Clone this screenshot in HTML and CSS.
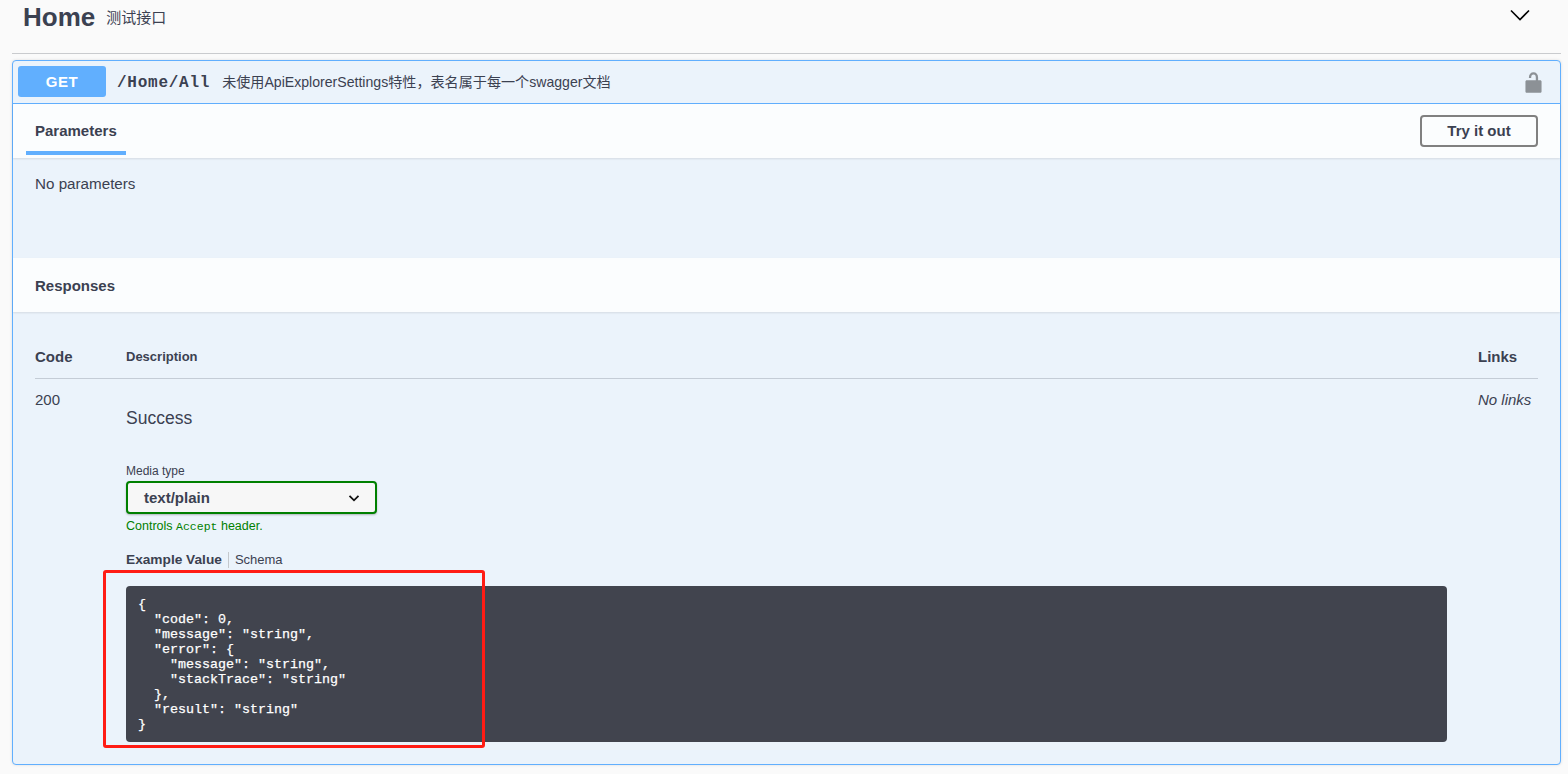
FILE: index.html
```html
<!DOCTYPE html>
<html lang="zh">
<head>
<meta charset="utf-8">
<title>Home</title>
<link rel="stylesheet" href="styles.css">
</head>
<body>
<div class="page">
  <header class="tag">
    <h3 class="tag-name">Home</h3>
    <span class="tag-desc">测试接口</span>
    <svg class="tag-arrow" width="20" height="20" viewBox="0 0 20 20"><path d="M1 5.5l9 9 9-9" fill="none" stroke="#000" stroke-width="1.6"/></svg>
  </header>
  <section class="op">
    <div class="op-head">
      <span class="method">GET</span>
      <span class="path">/Home/All</span>
      <span class="summary">未使用ApiExplorerSettings特性，表名属于每一个swagger文档</span>
      <svg class="lock" width="23" height="23" viewBox="0 0 20 20"><path d="M15.8 8H14V5.6C14 2.7 12.3 1 10 1S6 2.7 6 5.6V6h2v-.4C8 4 8.6 3 10 3s2 1 2 2.6V8H4.2C3.5 8 3 8.5 3 9.2v8.6c0 .7.5 1.2 1.2 1.2h11.6c.7 0 1.2-.5 1.2-1.2V9.2c0-.7-.5-1.2-1.2-1.2z" fill="#8c9196"/></svg>
    </div>
    <div class="bar bar-params">
      <div class="tab">Parameters</div>
      <button class="try">Try it out</button>
    </div>
    <div class="params-body">No parameters</div>
    <div class="bar bar-resp"><h4 class="resp-title">Responses</h4></div>
    <div class="resp-body">
      <div class="row row-head">
        <div class="col-code head-code">Code</div>
        <div class="col-desc head-desc">Description</div>
        <div class="col-links head-code">Links</div>
      </div>
      <div class="row row-main">
        <div class="col-code code-val">200</div>
        <div class="col-desc">
          <p class="success">Success</p>
          <div class="media-label">Media type</div>
          <div class="select"><span>text/plain</span>
            <svg width="20" height="20" viewBox="0 0 20 20"><path d="M5.5 7.8l4.5 4.5 4.5-4.5" fill="none" stroke="#111" stroke-width="1.8"/></svg>
          </div>
          <div class="controls">Controls <code class="accept">Accept</code> header.</div>
          <div class="tabs"><span class="tab-on">Example Value</span><span class="tab-off">Schema</span></div>
          <pre class="example">{
  "code": 0,
  "message": "string",
  "error": {
    "message": "string",
    "stackTrace": "string"
  },
  "result": "string"
}</pre>
        </div>
        <div class="col-links no-links">No links</div>
      </div>
    </div>
  </section>
  <div class="mark"></div>
</div>
</body>
</html>
```
FILE: styles.css
```css
html, body { margin: 0; padding: 0; height: 774px; overflow: hidden; background: #fafafa; }
body { font-family: "Liberation Sans", "Noto Sans CJK SC", sans-serif; color: #3b4151; }
.page { position: relative; padding: 0 7px 0 12px; }
.tag { display: flex; align-items: flex-start; height: 53px; border-bottom: 1px solid #c9cbce; }
.tag-name { margin: 0 0 0 11px; font-size: 26px; line-height: 34px; font-weight: 700; }
.tag-desc { margin: 7px 0 0 11px; font-size: 15px; line-height: 20px; color: #3b4151; font-family: "Noto Sans CJK SC", sans-serif; }
.tag-arrow { margin: 5px 31px 0 auto; }
.op { margin-top: 6px; border: 1px solid #61affe; border-radius: 4px; background: #ebf3fb; box-sizing: border-box; height: 705px; box-shadow: 0 0 3px rgba(0,0,0,.12); }
.op-head { display: flex; align-items: center; height: 42px; padding: 0 5px; border-bottom: 1px solid #61affe; }
.method { width: 88px; height: 31px; line-height: 31px; border-radius: 3px; background: #61affe; color: #fff; font-size: 15px; letter-spacing: .5px; font-weight: 700; text-align: center; flex: none; margin-top: -1px; }
.path { margin: 2px 0 0 11px; font-family: "Liberation Mono", monospace; font-size: 16px; letter-spacing: .75px; font-weight: 700; }
.summary { margin: 0 0 3px 12px; font-size: 14.1px; font-family: "Liberation Sans", "Noto Sans CJK SC", sans-serif; }
.lock { margin-left: auto; margin-right: 10px; }
.bar { display: flex; justify-content: space-between; background: rgba(255,255,255,.8); box-sizing: border-box; box-shadow: 0 1px 2px rgba(0,0,0,.1); }
.bar-params { height: 54px; padding: 0 22px 0 13px; align-items: flex-start; }
.tab { box-sizing: border-box; width: 100px; height: 51px; padding: 17px 0 0 9px; border-bottom: 4px solid #61affe; font-size: 15px; line-height: 20px; font-weight: 700; }
.try { margin-top: 11px; width: 118px; height: 32px; border: 2px solid #808080; border-radius: 4px; background: transparent; color: #3b4151; font: 700 15px "Liberation Sans", sans-serif; padding: 0 0 2px; }
.params-body { height: 100px; box-sizing: border-box; padding: 18px 22px; font-size: 15.2px; line-height: 16px; }
.bar-resp { height: 54px; align-items: center; padding: 0 22px; }
.resp-title { margin: 0; font-size: 15px; font-weight: 700; }
.resp-body { padding: 0 22px; }
.row { display: flex; }
.col-code { width: 91px; flex: none; }
.col-desc { flex: 1; min-width: 0; }
.col-links { width: 60px; flex: none; }
.row-head { height: 67px; align-items: flex-end; box-sizing: border-box; padding-bottom: 13px; border-bottom: 1px solid #c4ccd6; }
.head-code { font-size: 15px; line-height: 16px; font-weight: 700; }
.head-desc { font-size: 13px; line-height: 16px; font-weight: 700; }
.code-val { font-size: 15px; line-height: 16px; padding-top: 13px; }
.no-links { font-size: 15px; line-height: 16px; padding-top: 13px; font-style: italic; }
.success { margin: 30px 0 0; font-size: 17.5px; line-height: 18px; }
.media-label { margin-top: 37px; font-size: 12px; line-height: 14px; }
.select { display: flex; align-items: center; justify-content: space-between; margin-top: 3px; width: 251px; height: 33px; box-sizing: border-box; padding: 0 11px 0 16px; border: 2px solid #008000; border-radius: 4px; background: #f7f7f7; box-shadow: 0 1px 2px rgba(0,0,0,.25); font-size: 15px; font-weight: 700; }
.controls { margin-top: 4px; font-size: 12.5px; line-height: 16px; color: #008000; }
.accept { font-family: "Liberation Mono", monospace; font-size: 11.5px; }
.tabs { display: flex; align-items: center; margin-top: 17px; font-size: 13.7px; line-height: 16px; }
.tab-on { font-weight: 700; padding-right: 6px; border-right: 1px solid #c4c8cc; }
.tab-off { padding-left: 6px; font-size: 13px; }
.example { box-sizing: border-box; width: 1321px; height: 156px; margin: 18px 0 0; padding: 11px 12px; border-radius: 4px; background: #41444e; color: #fff; font-family: "Liberation Mono", monospace; font-size: 13.33px; line-height: 15px; font-weight: 400; -webkit-text-stroke: .25px #fff; }
.mark { position: absolute; left: 103px; top: 570px; width: 382px; height: 178px; box-sizing: border-box; border: 3px solid #ff1c14; border-radius: 3px; }
```
